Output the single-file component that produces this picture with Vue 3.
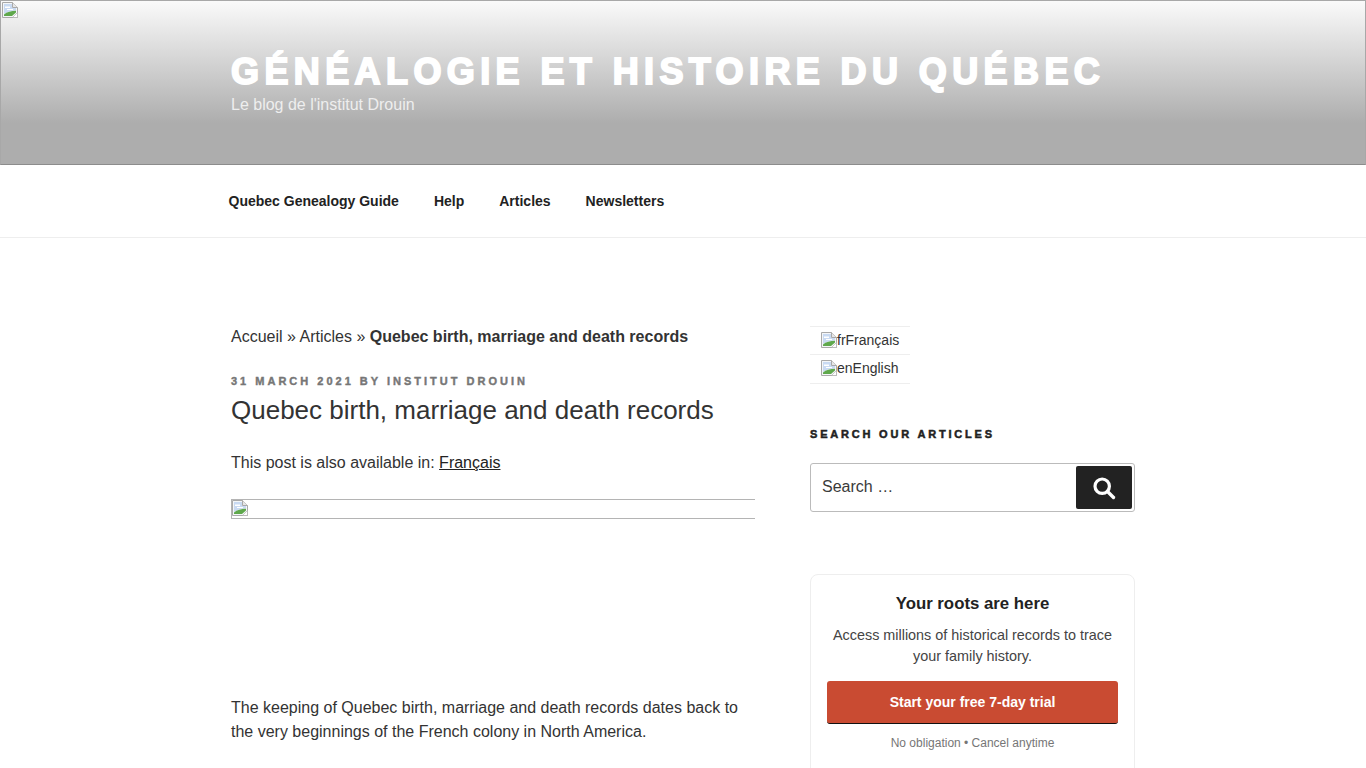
<script setup>
const nav = ['Quebec Genealogy Guide', 'Help', 'Articles', 'Newsletters']
const langs = [
  { code: 'fr', name: 'Français' },
  { code: 'en', name: 'English' },
]
</script>

<template>
  <div class="page">
    <header class="masthead">
      <svg class="broken top" viewBox="0 0 16 16" width="16" height="16"><use href="#broken" /></svg>
      <div class="branding">
        <h1 class="site-title">Généalogie et histoire du Québec</h1>
        <p class="tagline">Le blog de l'institut Drouin</p>
      </div>
    </header>

    <nav class="menu">
      <ul>
        <li v-for="item in nav" :key="item">{{ item }}</li>
      </ul>
    </nav>

    <div class="content">
      <main class="primary">
        <p class="crumbs">Accueil » Articles » <strong>Quebec birth, marriage and death records</strong></p>
        <div class="meta">31 March 2021 by Institut Drouin</div>
        <h2 class="title">Quebec birth, marriage and death records</h2>
        <p class="avail">This post is also available in: <a href="#">Français</a></p>
        <div class="figure">
          <svg class="broken" viewBox="0 0 16 16" width="16" height="16"><use href="#broken" /></svg>
        </div>
        <p class="body">The keeping of Quebec birth, marriage and death records dates back to the very beginnings of the French colony in North America.</p>
      </main>

      <aside class="sidebar">
        <ul class="langs">
          <li v-for="l in langs" :key="l.code">
            <svg class="broken" viewBox="0 0 16 16" width="16" height="16"><use href="#broken" /></svg><span>{{ l.code }}</span><span>{{ l.name }}</span>
          </li>
        </ul>

        <h3 class="widget-title">Search our articles</h3>
        <div class="search">
          <span class="placeholder">Search …</span>
          <button class="search-btn" aria-label="Search">
            <svg viewBox="0 0 24 24" width="24" height="24" fill="none" stroke="#fff">
              <circle cx="10.2" cy="10.2" r="7.2" stroke-width="3.2" />
              <path d="M15.5 15.5 L21.5 21.5" stroke-width="3.4" stroke-linecap="round" />
            </svg>
          </button>
        </div>

        <section class="card">
          <h4>Your roots are here</h4>
          <p class="lead">Access millions of historical records to trace your family history.</p>
          <a class="cta" href="#">Start your free 7-day trial</a>
          <p class="small">No obligation • Cancel anytime</p>
        </section>
      </aside>
    </div>

    <svg width="0" height="0" class="defs">
      <symbol id="broken" viewBox="0 0 16 16">
        <path d="M0.5 0.5H10.5L15.5 5.5V15.5H0.5Z" fill="#f4f6f8" stroke="#a9a9a9" />
        <path d="M2 2H10V6H14V8.5C10 8.5 6 9.5 2 12Z" fill="#c9daf2" />
        <path d="M3 4.5H8V6H3ZM5 7H11V8H5Z" fill="#fff" />
        <path d="M2 14V12.5C5 10 9 8.8 14 8.8V10.5L10 14Z" fill="#5fa84c" />
        <path d="M10.5 0.5V5.5H15.5" fill="#e6e6e6" stroke="#a9a9a9" />
        <path d="M15.5 10.5L10.5 15.5H15.5Z" fill="#fff" stroke="#a9a9a9" stroke-width=".6" />
      </symbol>
    </svg>
  </div>
</template>

<style>
html, body { margin: 0; background: #fff; }
</style>

<style scoped>
.page {
  font-family: "Liberation Sans", Arial, sans-serif;
  color: #333;
  font-size: 16px;
  height: 768px;
  overflow: hidden;
}
.defs { position: absolute; }
.broken { display: block; flex: none; }

.masthead {
  position: relative;
  box-sizing: border-box;
  height: 165px;
  border: 1px solid #a8a8a8;
  border-bottom-color: #8c8c8c;
  background: linear-gradient(to bottom, #fafafa 0%, #adadad 75%, #adadad 100%);
  padding: 52px 0 0 230px;
}
.broken.top { position: absolute; left: 1px; top: 1px; }
.site-title {
  margin: 0;
  color: #fff;
  font-size: 36px;
  line-height: 38px;
  font-weight: 700;
  text-transform: uppercase;
  letter-spacing: 5.4px;
  -webkit-text-stroke: 1.9px #fff;
  white-space: nowrap;
}
.tagline {
  margin: 2px 0 0;
  color: #eee;
  font-size: 16px;
  line-height: 24px;
}

.menu {
  box-sizing: border-box;
  height: 73px;
  border-bottom: 1px solid #eee;
  padding-left: 228.5px;
}
.menu ul {
  display: flex;
  gap: 35px;
  margin: 0;
  padding: 0;
  list-style: none;
}
.menu li {
  font-size: 14px;
  font-weight: 700;
  line-height: 72px;
  color: #222;
}

.content {
  display: flex;
  padding: 87px 0 0 231px;
}
.primary {
  width: 524px;
  margin-right: 55px;
}
.crumbs {
  margin: 0;
  line-height: 24px;
}
.crumbs strong { font-weight: 700; }
.meta {
  margin-top: 24px;
  font-size: 11px;
  line-height: 16px;
  font-weight: 700;
  text-transform: uppercase;
  letter-spacing: 3px;
  color: #767676;
  -webkit-text-stroke: .4px #767676;
}
.title {
  margin: 3px 0 0;
  font-size: 26px;
  line-height: 36px;
  font-weight: 400;
  color: #333;
}
.avail {
  margin: 23px 0 0;
  line-height: 24px;
}
.avail a { color: #222; }
.figure {
  box-sizing: border-box;
  height: 20px;
  margin-top: 24px;
  border: 1px solid #b4b4b4;
  border-right: 0;
}
.body {
  margin: 177px 0 0;
  line-height: 24px;
}

.sidebar { width: 325px; }
.langs {
  width: 100px;
  margin: 1px 0 0;
  padding: 0;
  list-style: none;
  border-bottom: 1px solid #eee;
}
.langs li {
  box-sizing: border-box;
  display: flex;
  align-items: center;
  height: 29px;
  padding: 0 0 2px 11px;
  border-top: 1px solid #eee;
  font-size: 14px;
  color: #333;
}
.langs li:first-child {
  height: 28px;
  padding-bottom: 1px;
}
.widget-title {
  margin: 42px 0 0;
  font-size: 11px;
  line-height: 16px;
  font-weight: 700;
  text-transform: uppercase;
  letter-spacing: 2.8px;
  color: #222;
  -webkit-text-stroke: .5px #222;
}
.search {
  box-sizing: border-box;
  display: flex;
  align-items: center;
  justify-content: space-between;
  height: 49px;
  margin-top: 21px;
  padding: 2px 2px 2px 11px;
  border: 1px solid #bbb;
  border-radius: 3px;
}
.placeholder { color: #3a3a3a; font-size: 16px; margin-bottom: 2px; }
.search-btn {
  display: flex;
  align-items: center;
  justify-content: center;
  width: 56px;
  height: 43px;
  padding: 0;
  border: 0;
  border-radius: 2px;
  background: #222;
}
.card {
  box-sizing: border-box;
  height: 240px;
  margin-top: 62px;
  padding: 17px 16px 0;
  border: 1px solid #eee;
  border-radius: 8px;
  text-align: center;
}
.card h4 {
  margin: 0;
  font-size: 16.8px;
  line-height: 24px;
  font-weight: 700;
  color: #222;
}
.lead {
  margin: 9px 0 0;
  font-size: 14.4px;
  line-height: 21px;
  color: #444;
}
.cta {
  display: block;
  box-sizing: border-box;
  height: 43px;
  margin-top: 14px;
  border-bottom: 1px solid #111;
  border-radius: 3px;
  background: #c94b32;
  color: #fff;
  font-size: 14px;
  font-weight: 700;
  line-height: 42px;
  text-decoration: none;
}
.small {
  margin: 10px 0 0;
  font-size: 12px;
  line-height: 18px;
  color: #767676;
}
</style>
